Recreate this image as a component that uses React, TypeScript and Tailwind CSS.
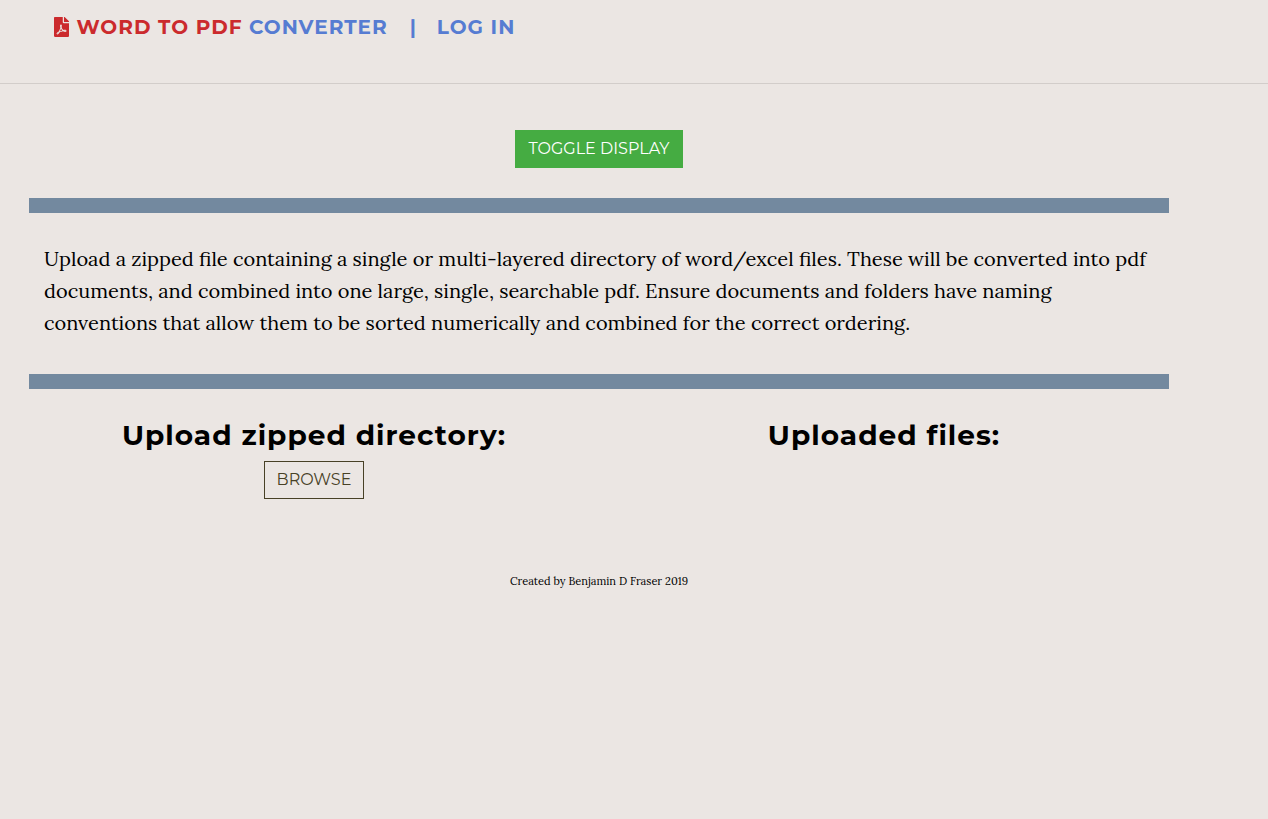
import { FaFilePdf } from 'react-icons/fa';

export default function App() {
  return (
    <div className="min-h-screen bg-[#ebe6e3] font-['Lora','Noto_Serif','Liberation_Serif',serif] text-black">
      <header className="flex h-[84px] border-b border-[#d2cdca] pl-[54px] pt-[15px]">
        <h1 className="flex h-6 items-center whitespace-nowrap font-['Montserrat','Inter',sans-serif] text-[20px] font-bold tracking-[1px] text-[#567cd2]">
          <FaFilePdf className="mb-px h-5 w-[15px] text-[#cb2a2d]" />
          <span className="ml-[7.5px] text-[#cb2a2d]">WORD TO PDF</span>
          <a className="ml-[6.5px]">CONVERTER</a>
          <span className="ml-[22px]">|</span>
          <a className="ml-5">LOG IN</a>
        </h1>
      </header>
      <main className="ml-[29px] w-[1140px] pt-[46px]">
        <button className="mx-auto block h-[38px] w-[168px] bg-[#45ac42] font-['Montserrat','Inter',sans-serif] text-base text-white">
          TOGGLE DISPLAY
        </button>
        <p className="mt-[30px] border-y-[15px] border-[#73899f] px-[15px] pb-[35px] pt-[30px] text-[20px] leading-8">
          Upload a zipped file containing a single or multi-layered directory of word/excel files. These will be converted into pdf documents, and combined into one large, single, searchable pdf. Ensure documents and folders have naming conventions that allow them to be sorted numerically and combined for the correct ordering.
        </p>
        <div className="grid h-[150px] grid-cols-2 pt-[29px] text-center">
          <section>
            <h2 className="font-['Montserrat','Inter',sans-serif] text-[28px] font-bold leading-[34px] tracking-[1px]">Upload zipped directory:</h2>
            <button className="mt-[9px] h-[38px] w-[100px] border border-[#484126] font-['Montserrat','Inter',sans-serif] text-base text-[#484126]">
              BROWSE
            </button>
          </section>
          <section>
            <h2 className="font-['Montserrat','Inter',sans-serif] text-[28px] font-bold leading-[34px] tracking-[1px]">Uploaded files:</h2>
          </section>
        </div>
        <footer className="pt-[33px] text-center text-[11px] leading-[18px]">Created by Benjamin D Fraser 2019</footer>
      </main>
    </div>
  );
}
